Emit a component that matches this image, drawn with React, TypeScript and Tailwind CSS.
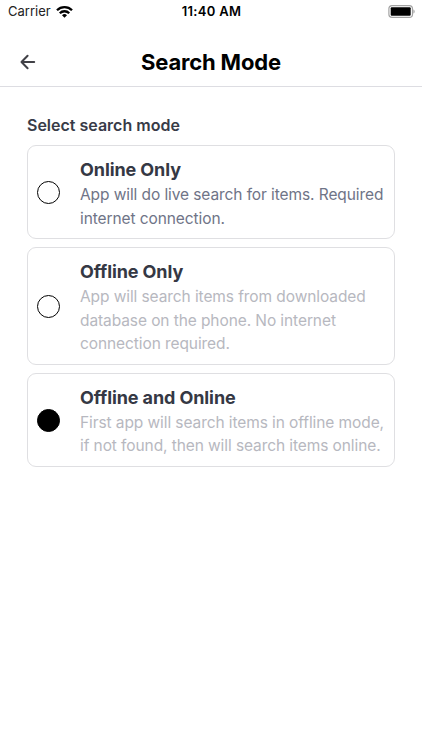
import { useState } from 'react';

interface Mode {
  id: string;
  title: string;
  lines: string[];
  tone: string;
}

const modes: Mode[] = [
  {
    id: 'online',
    title: 'Online Only',
    lines: ['App will do live search for items. Required', 'internet connection.'],
    tone: 'text-[#6f7487]',
  },
  {
    id: 'offline',
    title: 'Offline Only',
    lines: ['App will search items from downloaded', 'database on the phone. No internet', 'connection required.'],
    tone: 'text-[#b7b8c0]',
  },
  {
    id: 'both',
    title: 'Offline and Online',
    lines: ['First app will search items in offline mode,', 'if not found, then will search items online.'],
    tone: 'text-[#b7b8c0]',
  },
];

function StatusBar() {
  return (
    <div className="grid h-6 grid-cols-3 items-center pl-2 pr-[7px] text-[13px] text-black">
      <div className="flex items-center gap-[5px]">
        <span className="text-[#222]">Carrier</span>
        <svg width="17" height="12" viewBox="0 0 17 12" fill="none" stroke="black" strokeWidth="2.3">
          <path d="M1 4.3a10.6 10.6 0 0 1 15 0" />
          <path d="M3.8 7.2a6.6 6.6 0 0 1 9.4 0" />
          <path d="M8.5 11.8 6 9.3a3.5 3.5 0 0 1 5 0Z" fill="black" stroke="none" />
        </svg>
      </div>
      <span className="text-center font-semibold tracking-[0.3px]">11:40 AM</span>
      <svg className="-mt-px justify-self-end" width="27" height="13" viewBox="0 0 27 13">
        <rect x="0.9" y="0.6" width="23.6" height="11.8" rx="3.2" fill="none" stroke="#a3a3a3" strokeWidth="1.2" />
        <rect x="2.7" y="2.2" width="20" height="8.6" rx="1" fill="black" />
        <path d="M25.4 4.4c1.7.7 1.7 3.5 0 4.2Z" fill="#a6a6a6" />
      </svg>
    </div>
  );
}

export default function App() {
  const [selected, setSelected] = useState('both');

  return (
    <div className="h-[750px] w-[422px] bg-white font-['Inter',sans-serif]">
      <StatusBar />
      <header className="grid h-[63px] grid-cols-[48px_1fr_48px] items-center border-b border-[#dddde2] pt-[14px]">
        <button aria-label="Back" className="pl-5">
          <svg width="16" height="16" viewBox="0 0 16 16" fill="none" stroke="#414147" strokeWidth="2" strokeLinecap="round" strokeLinejoin="round">
            <path d="M14.2 8H1.7M7.6 1.8 1.5 8l6.1 6.2" />
          </svg>
        </button>
        <h1 className="text-center text-[22px] font-[650] leading-7 tracking-[-0.18px] text-black">Search Mode</h1>
      </header>

      <main className="px-[27px] pt-[28px]">
        <h2 className="mb-[10.4px] text-base font-[620] leading-5 text-[#383b47]">Select search mode</h2>
        <div className="flex flex-col gap-2">
          {modes.map(mode => (
            <button
              key={mode.id}
              onClick={() => setSelected(mode.id)}
              className="flex items-center rounded-[9px] border border-[#dfdfe2] pb-2 pl-[9px] pt-[10px] text-left"
            >
              <span
                className={`-mt-px mr-5 size-[23px] shrink-0 rounded-full border border-black ${selected === mode.id ? 'bg-black' : ''}`}
              />
              <span className="block whitespace-nowrap">
                <span className="block text-lg font-[650] leading-[27px] tracking-[-0.1px] text-[#353844]">{mode.title}</span>
                {mode.lines.map(line => (
                  <span key={line} className={`block text-[15.5px] leading-[23.5px] tracking-[-0.09px] ${mode.tone}`}>{line}</span>
                ))}
              </span>
            </button>
          ))}
        </div>
      </main>
    </div>
  );
}
